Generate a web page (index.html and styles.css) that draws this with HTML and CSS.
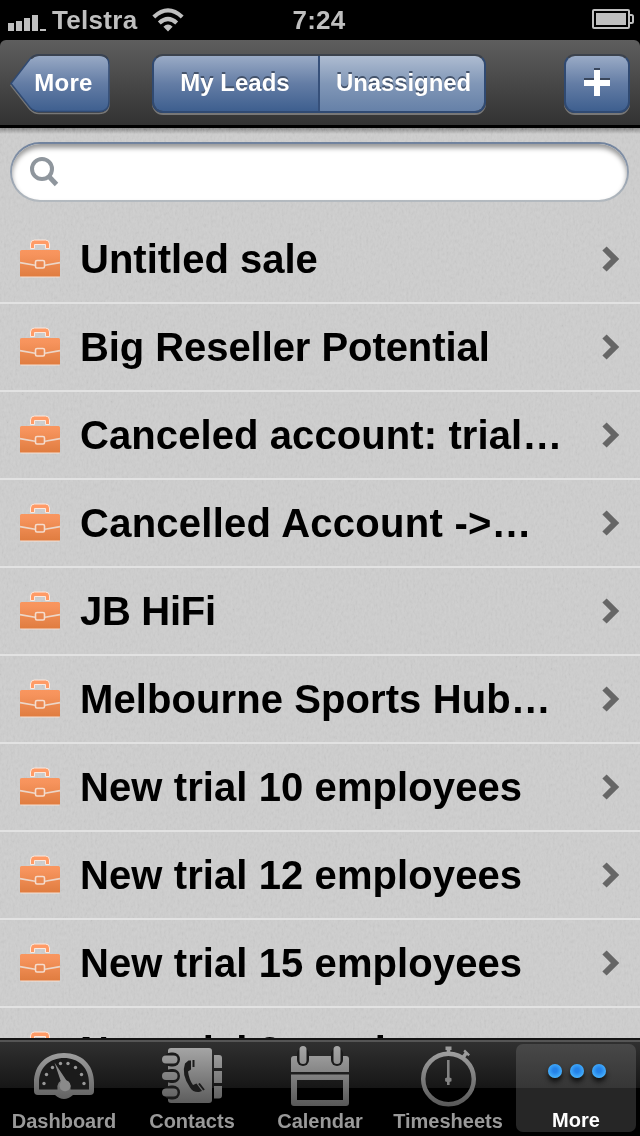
FILE: index.html
```html
<!DOCTYPE html>
<html lang="en">
<head>
    <meta charset="UTF-8">
    <meta name="viewport" content="width=device-width, initial-scale=1.0">
    <title>My Leads</title>
    <link rel="stylesheet" href="styles.css">
</head>
<body>

<svg class="defs" width="0" height="0">
    <defs>
        <linearGradient id="orange" gradientUnits="userSpaceOnUse" x1="0" y1="0" x2="0" y2="40">
            <stop offset="0" stop-color="#ff9b66"/>
            <stop offset="0.4" stop-color="#f6935c"/>
            <stop offset="1" stop-color="#dd7a3d"/>
        </linearGradient>
        <linearGradient id="silver" gradientUnits="userSpaceOnUse" x1="0" y1="0" x2="0" y2="64">
            <stop offset="0" stop-color="#aaaaaa"/>
            <stop offset="1" stop-color="#565656"/>
        </linearGradient>
        <linearGradient id="blue" x1="0" y1="0" x2="0" y2="1">
            <stop offset="0" stop-color="#9aabc6"/>
            <stop offset="0.5" stop-color="#647da5"/>
            <stop offset="1" stop-color="#3e5f8f"/>
        </linearGradient>
        <filter id="grain" x="0" y="0" width="100%" height="100%">
            <feTurbulence type="fractalNoise" baseFrequency="0.45 0.25" numOctaves="3" seed="4"/>
            <feColorMatrix values="1 0 0 0 -0.1  1 0 0 0 -0.1  1 0 0 0 -0.1  0 0 0 0 1"/>
        </filter>
        <symbol id="briefcase" viewBox="0 0 42 40">
            <path d="M11.500 9.500V5q0-4 4-4h11q4 0 4 4v4.500h-4V5.500h-11v4z" fill="#ff9b66" stroke="#fbe9df" stroke-width="1"/>
            <rect x="1" y="11" width="40" height="27" rx="1.5" fill="url(#orange)"/>
            <path d="M1.500 38h39" stroke="#f7e0d2" stroke-width="1"/>
            <path d="M1 23.600l15 2.600M41 23.600l-15 2.600" stroke="#ecd6c8" stroke-width="1.600" fill="none"/>
            <rect x="16.500" y="21.500" width="9" height="7.500" rx="1.500" fill="#ea8850" stroke="#f5dccd" stroke-width="1.600"/>
        </symbol>
        <symbol id="chevron" viewBox="0 0 18 26">
            <path d="M2.500 2.500L13 13 2.500 23.500" fill="none" stroke="#666" stroke-width="6"/>
        </symbol>
    </defs>
</svg>

<div class="screen">
    <header class="status-bar">
        <div class="carrier">
            <svg class="signal" width="38" height="18" viewBox="0 0 38 18" fill="#bfbfbf">
                <path d="M0 9h6v8H0zM8 7h6v10H8zM16 4h6v13h-6zM24 1h6v16h-6zM32 15h6v2h-6z"/>
            </svg>
            <span class="carrier-name">Telstra</span>
            <svg class="wifi" width="32" height="24" viewBox="0 0 32 24" fill="none" stroke="#bfbfbf" stroke-width="4.2">
                <path d="M1.800 9Q16-4.200 30.200 9"/>
                <path d="M7.300 15Q16 7 24.700 15"/>
                <path d="M16 23.500l-4.600-4.800q4.600-4.200 9.200 0z" fill="#bfbfbf" stroke="none"/>
            </svg>
        </div>
        <span class="clock">7:24</span>
        <svg class="battery" width="42" height="20" viewBox="0 0 42 20">
            <rect x="1" y="1" width="36" height="18" rx="1" fill="none" stroke="#bfbfbf" stroke-width="2"/>
            <rect x="4" y="4" width="30" height="12" fill="#bfbfbf"/>
            <path d="M37 6h2.500q1.500 0 1.500 1.500v5q0 1.500-1.500 1.500H37" fill="none" stroke="#bfbfbf" stroke-width="2"/>
        </svg>
    </header>

    <nav class="nav-bar">
        <button class="back">
            <svg class="back-shape" width="102" height="62" viewBox="0 0 102 62">
                <path d="M1 31.500L20 6.500Q24 2.500 29 2.500H89q10 0 10 10v37q0 10-10 10H29q-5 0-9-4z" fill="none" stroke="#777" stroke-width="1.500"/>
                <path d="M1 29.500L20 5Q24 1 29 1H89q10 0 10 10v36.500q0 10-10 10H29q-5 0-9-4z" fill="url(#blue)" stroke="#304a72" stroke-width="1.500"/>
                <path d="M21 4.500Q24.500 1 29 1H89q6 0 8.500 3.500" fill="none" stroke="#3a424f" stroke-width="1.800"/>
            </svg>
            <span class="back-text">More</span>
        </button>
        <div class="segments">
            <button class="segment segment-leads">My Leads</button>
            <button class="segment segment-unassigned">Unassigned</button>
        </div>
        <button class="add">
            <svg width="28" height="30" viewBox="0 0 28 30">
                <path d="M11 0h6v10h10v6H17v10h-6V16H1v-6h10z" fill="#39465b"/>
                <path d="M11 2h6v10h10v6H17v10h-6V18H1v-6h10z" fill="#fff"/>
            </svg>
        </button>
    </nav>

    <main class="content">
        <svg class="grain" width="640" height="912"><rect width="640" height="912" filter="url(#grain)"/></svg>
        <div class="search">
            <div class="search-field">
                <svg width="30" height="32" viewBox="0 0 30 32" fill="none" stroke="#8f969d">
                    <circle cx="13" cy="13" r="10" stroke-width="4"/>
                    <path d="M19.500 20l8 8.500" stroke-width="4.800"/>
                </svg>
            </div>
        </div>
        <ul class="leads">
            <li class="lead"><svg class="case"><use href="#briefcase"/></svg><span class="name">Untitled sale</span><svg class="arrow"><use href="#chevron"/></svg></li>
            <li class="lead"><svg class="case"><use href="#briefcase"/></svg><span class="name name-reseller">Big Reseller Potential</span><svg class="arrow"><use href="#chevron"/></svg></li>
            <li class="lead"><svg class="case"><use href="#briefcase"/></svg><span class="name name-trial">Canceled account: trial…</span><svg class="arrow"><use href="#chevron"/></svg></li>
            <li class="lead"><svg class="case"><use href="#briefcase"/></svg><span class="name name-cancelled">Cancelled Account -&gt;…</span><svg class="arrow"><use href="#chevron"/></svg></li>
            <li class="lead"><svg class="case"><use href="#briefcase"/></svg><span class="name name-hifi">JB HiFi</span><svg class="arrow"><use href="#chevron"/></svg></li>
            <li class="lead"><svg class="case"><use href="#briefcase"/></svg><span class="name name-trial">Melbourne Sports Hub…</span><svg class="arrow"><use href="#chevron"/></svg></li>
            <li class="lead"><svg class="case"><use href="#briefcase"/></svg><span class="name name-trial">New trial 10 employees</span><svg class="arrow"><use href="#chevron"/></svg></li>
            <li class="lead"><svg class="case"><use href="#briefcase"/></svg><span class="name name-trial">New trial 12 employees</span><svg class="arrow"><use href="#chevron"/></svg></li>
            <li class="lead"><svg class="case"><use href="#briefcase"/></svg><span class="name name-trial">New trial 15 employees</span><svg class="arrow"><use href="#chevron"/></svg></li>
            <li class="lead"><svg class="case"><use href="#briefcase"/></svg><span class="name name-trial">New trial 2 employees</span><svg class="arrow"><use href="#chevron"/></svg></li>
        </ul>
    </main>

    <footer class="tab-bar">
        <div class="tab">
            <svg class="tab-icon" viewBox="0 0 64 64">
                <path d="M2 47V39C2 20 15 9 32 9s30 11 30 30v8q0 4-4 4H41q-9 8-18 0H6q-4 0-4-4z" fill="url(#silver)"/>
                <path d="M7 45.500V39C7 23 18 14 32 14s25 9 25 25v6.500H38.500q1-9-6.500-9.500-7.500.5-6.500 9.500z" fill="#1b1b1b"/>
                <path d="M22.500 18.500L34.500 36.500a5.500 5.500 0 1 1-5.500 1.500z" fill="#8a8a8a"/>
                <g fill="#999"><circle cx="12" cy="39.500" r="1.700"/><circle cx="14.500" cy="30.500" r="1.700"/><circle cx="20.500" cy="23.500" r="1.700"/><circle cx="28.500" cy="19.500" r="1.700"/><circle cx="36" cy="19.500" r="1.700"/><circle cx="43.500" cy="23.500" r="1.700"/><circle cx="49.500" cy="30.500" r="1.700"/><circle cx="52" cy="39.500" r="1.700"/></g>
            </svg>
            <span class="tab-text">Dashboard</span>
        </div>
        <div class="tab">
            <svg class="tab-icon" viewBox="0 0 64 64">
                <rect x="8" y="4" width="44" height="55" rx="3" fill="url(#silver)"/>
                <g fill="#1b1b1b"><rect x="4" y="8.500" width="16" height="14" rx="7"/><rect x="4" y="25" width="16" height="14" rx="7"/><rect x="4" y="41.500" width="16" height="14" rx="7"/></g>
                <g fill="url(#silver)"><rect x="2" y="11.500" width="15.500" height="8" rx="4"/><rect x="2" y="28" width="15.500" height="8" rx="4"/><rect x="2" y="44.500" width="15.500" height="8" rx="4"/></g>
                <path d="M54 11h5q3 0 3 3v10h-8zM54 27h8v12h-8zM54 42h8v9.500q0 3-3 3h-5z" fill="url(#silver)"/>
                <path d="M28.500 16.500l2.500 0v9l-3 2q1 8 5 13.500l3.500-1.500 5.500 7.500-3 1q-6 .5-9-4.500-9-13-5-24z" fill="#1c1c1c"/>
                <path d="M33.500 16v7M39 39.500l5 6.500" stroke="#1c1c1c" fill="none" stroke-width="2"/>
            </svg>
            <span class="tab-text">Contacts</span>
        </div>
        <div class="tab">
            <svg class="tab-icon" viewBox="0 0 64 64">
                <path d="M3 15q0-3 3-3h52q3 0 3 3v13H3z" fill="url(#silver)"/>
                <path d="M3 30.500h58V59q0 3-3 3H6q-3 0-3-3zM9 36v20h46V36z" fill-rule="evenodd" fill="url(#silver)"/>
                <g fill="#1b1b1b"><rect x="9" y="4" width="12" height="18" rx="6"/><rect x="43" y="4" width="12" height="18" rx="6"/></g>
                <g fill="url(#silver)"><rect x="11.500" y="2" width="7" height="18" rx="3.500"/><rect x="45.500" y="2" width="7" height="18" rx="3.500"/></g>
            </svg>
            <span class="tab-text">Calendar</span>
        </div>
        <div class="tab">
            <svg class="tab-icon" viewBox="0 0 64 64">
                <circle cx="32.500" cy="35" r="25.300" fill="none" stroke="url(#silver)" stroke-width="4.500"/>
                <path d="M29.500 2.500h6v3.500h-1.200v3h-3.600v-3h-1.200zM45.500 12.500l3-4-1.200-1.200 1.700-1.700 5 5-1.700 1.700-1.300-1.200-2.700 4z" fill="#9c9c9c"/>
                <path d="M31 16h2.600v17.500l1.900.8v3l-1.900.7v3h-2.600v-3l-1.900-.7v-3l1.900-.8z" fill="#838383"/>
            </svg>
            <span class="tab-text">Timesheets</span>
        </div>
        <div class="tab tab-active">
            <div class="dots"><i></i><i></i><i></i></div>
            <span class="tab-text">More</span>
        </div>
    </footer>
</div>

</body>
</html>
```
FILE: styles.css
```css
* {
    box-sizing: border-box;
}

body {
    margin: 0;
    background: #000;
    font-family: "Liberation Sans", Arial, sans-serif;
    font-weight: bold;
}

button {
    padding: 0;
    border: none;
    background: none;
    font: inherit;
    color: #fff;
}

.defs {
    position: absolute;
}

.screen {
    width: 640px;
    height: 1136px;
    display: flex;
    flex-direction: column;
    overflow: hidden;
}

/* Status bar */
.status-bar {
    height: 40px;
    flex: none;
    display: grid;
    grid-template-columns: 1fr auto 1fr;
    align-items: center;
    padding: 0 6px 0 8px;
    color: #bfbfbf;
    font-size: 26px;
    line-height: 40px;
}

.carrier {
    display: flex;
    align-items: center;
}

.signal {
    margin-top: 5px;
}

.carrier-name {
    margin-left: 6px;
    width: 100px;
    letter-spacing: 0.3px;
}

.clock {
    margin-left: -4px;
    letter-spacing: 0.3px;
}

.battery {
    justify-self: end;
    margin-top: -2px;
}

/* Navigation bar */
.nav-bar {
    height: 88px;
    flex: none;
    display: flex;
    align-items: flex-start;
    padding: 14px 10px 0;
    border-bottom: 3px solid #000;
    border-radius: 6px 6px 0 0;
    background: linear-gradient(#5e5e5e, #323232);
    font-size: 24px;
    text-shadow: 0 -2px 0 #44536b;
}

.back {
    display: grid;
    width: 102px;
    height: 62px;
}

.back-shape,
.back-text {
    grid-area: 1 / 1;
}

.back-text {
    padding-left: 5px;
    line-height: 58px;
    letter-spacing: 0.3px;
}

.segments {
    display: flex;
    width: 334px;
    height: 59px;
    margin-left: 40px;
    border: 2px solid #304a72;
    border-top-color: #3c424c;
    border-radius: 11px;
    box-shadow: 0 2px 0 #777;
    overflow: hidden;
}

.segment {
    height: 55px;
    line-height: 54px;
    padding-bottom: 2px;
    text-shadow: inherit;
}

.segment-leads {
    width: 166px;
    padding-right: 2px;
    background: linear-gradient(#9aabc6, #647da5 50%, #3e5f8f);
    border-right: 2px solid #36507a;
}

.segment-unassigned {
    flex: 1;
    padding-left: 3px;
    letter-spacing: -0.1px;
    background: linear-gradient(#aebcd1, #8197b7 50%, #6681a8);
}

.add {
    width: 66px;
    height: 59px;
    padding-bottom: 2px;
    margin-left: auto;
    display: flex;
    align-items: center;
    justify-content: center;
    border: 2px solid #304a72;
    border-top-color: #3c424c;
    border-radius: 11px;
    background: linear-gradient(#9aabc6, #647da5 50%, #3e5f8f);
    box-shadow: 0 2px 0 #777;
}

/* Leads list */
.content {
    position: relative;
    flex: 1;
    min-height: 0;
    overflow: hidden;
    background: linear-gradient(#858585, #cacaca 6px);
}

.grain {
    position: absolute;
    top: 0;
    left: 0;
    opacity: 0.16;
    mix-blend-mode: overlay;
}

.search {
    position: relative;
    padding: 14px 11px 0 10px;
    height: 88px;
}

.search-field {
    height: 60px;
    padding: 12px 17px;
    border: 2px solid transparent;
    border-radius: 30px;
    background: linear-gradient(#fff, #fff) padding-box, linear-gradient(#70829d, #b4babf) border-box;
    box-shadow: inset 0 4px 5px #999;
}

.leads {
    position: relative;
    margin: 0;
    padding: 0;
    list-style: none;
}

.lead {
    display: flex;
    align-items: center;
    height: 88px;
    padding: 0 20px 0 19px;
    border-bottom: 2px solid #e2e2e2;
}

.case {
    width: 42px;
    height: 40px;
    flex: none;
}

.name {
    flex: 1;
    margin-left: 19px;
    font-size: 40px;
    line-height: 86px;
    white-space: nowrap;
    color: #000;
}

.name-reseller {
    letter-spacing: -0.07px;
}

.name-trial {
    letter-spacing: 0.09px;
}

.name-cancelled {
    letter-spacing: 0.26px;
}

.name-hifi {
    letter-spacing: -0.3px;
}

.arrow {
    width: 18px;
    height: 26px;
    flex: none;
}

/* Tab bar */
.tab-bar {
    height: 98px;
    flex: none;
    display: grid;
    grid-template-columns: repeat(5, 128px);
    border-top: 2px solid #151515;
    background: linear-gradient(#555 0, #555 2px, #303030 2px, #161616 48px, #000 48px);
    color: #999;
}

.tab {
    display: flex;
    flex-direction: column;
    align-items: center;
    padding-top: 4px;
}

.tab-icon {
    width: 64px;
    height: 64px;
}

.tab-text {
    padding-top: 1px;
    font-size: 20px;
    line-height: 24px;
    white-space: nowrap;
}

.tab-active {
    width: 120px;
    height: 88px;
    margin: 4px 0 0 4px;
    padding: 0;
    border-radius: 7px;
    background: linear-gradient(#484848, #363636 44px, #262626 44px);
    color: #fff;
}

.dots {
    display: flex;
    gap: 8px;
    height: 64px;
    padding: 20px 0 0 2px;
}

.dots i {
    width: 14px;
    height: 14px;
    border-radius: 50%;
    background: radial-gradient(circle at 50% 45%, #2482e8 20%, #48b4ff 75%);
    box-shadow: 0 4px 5px #111;
}
```
